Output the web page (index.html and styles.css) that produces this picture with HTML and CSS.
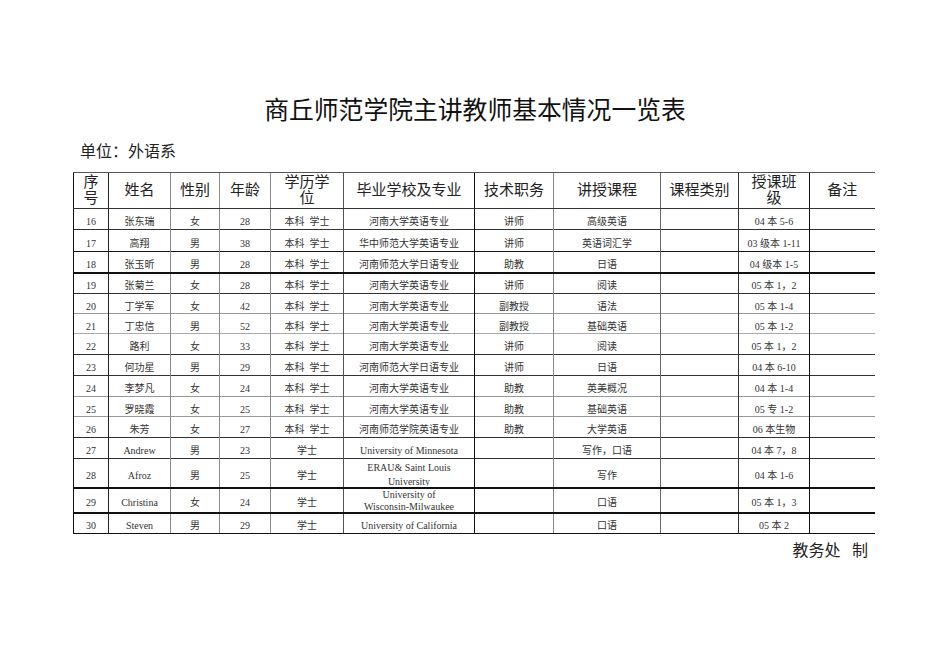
FILE: index.html
```html
<!DOCTYPE html>
<html lang="zh-CN">
<head>
<meta charset="utf-8">
<title>商丘师范学院主讲教师基本情况一览表</title>
<link rel="stylesheet" href="styles.css">
</head>
<body>
<div class="page">
  <h1 class="title">商丘师范学院主讲教师基本情况一览表</h1>
  <div class="unit">单位：外语系</div>
  <table class="sheet">
    <colgroup>
      <col class="c1"><col class="c2"><col class="c3"><col class="c4"><col class="c5"><col class="c6"><col class="c7"><col class="c8"><col class="c9"><col class="c10"><col class="c11">
    </colgroup>
    <thead>
      <tr class="head">
        <th class="v1">序<br>号</th>
        <th class="v2">姓名</th>
        <th class="v3">性别</th>
        <th class="v4">年龄</th>
        <th class="v5">学历学<br>位</th>
        <th class="v6">毕业学校及专业</th>
        <th class="v7">技术职务</th>
        <th class="v8">讲授课程</th>
        <th class="v9">课程类别</th>
        <th class="v10">授课班<br>级</th>
        <th class="v11">备注</th>
      </tr>
    </thead>
    <tbody>
      <tr class="r h21 t-dark"><td class="v1">16</td><td class="v2">张东瑞</td><td class="v3">女</td><td class="v4">28</td><td class="v5">本科&nbsp;&nbsp;学士</td><td class="v6">河南大学英语专业</td><td class="v7">讲师</td><td class="v8">高级英语</td><td class="v9"></td><td class="v10">04 本 5-6</td><td class="v11"></td></tr>
      <tr class="r h22 t-dark"><td class="v1">17</td><td class="v2">高翔</td><td class="v3">男</td><td class="v4">38</td><td class="v5">本科&nbsp;&nbsp;学士</td><td class="v6">华中师范大学英语专业</td><td class="v7">讲师</td><td class="v8">英语词汇学</td><td class="v9"></td><td class="v10">03 级本 1-11</td><td class="v11"></td></tr>
      <tr class="r h21 t-black"><td class="v1">18</td><td class="v2">张玉昕</td><td class="v3">男</td><td class="v4">28</td><td class="v5">本科&nbsp;&nbsp;学士</td><td class="v6">河南师范大学日语专业</td><td class="v7">助教</td><td class="v8">日语</td><td class="v9"></td><td class="v10">04 级本 1-5</td><td class="v11"></td></tr>
      <tr class="r h21 t-thick"><td class="v1">19</td><td class="v2">张菊兰</td><td class="v3">女</td><td class="v4">28</td><td class="v5">本科&nbsp;&nbsp;学士</td><td class="v6">河南大学英语专业</td><td class="v7">讲师</td><td class="v8">阅读</td><td class="v9"></td><td class="v10">05 本 1，2</td><td class="v11"></td></tr>
      <tr class="r h20 t-dark"><td class="v1">20</td><td class="v2">丁学军</td><td class="v3">女</td><td class="v4">42</td><td class="v5">本科&nbsp;&nbsp;学士</td><td class="v6">河南大学英语专业</td><td class="v7">副教授</td><td class="v8">语法</td><td class="v9"></td><td class="v10">05 本 1-4</td><td class="v11"></td></tr>
      <tr class="r h20 t-grey"><td class="v1">21</td><td class="v2">丁忠信</td><td class="v3">男</td><td class="v4">52</td><td class="v5">本科&nbsp;&nbsp;学士</td><td class="v6">河南大学英语专业</td><td class="v7">副教授</td><td class="v8">基础英语</td><td class="v9"></td><td class="v10">05 本 1-2</td><td class="v11"></td></tr>
      <tr class="r h21 t-light"><td class="v1">22</td><td class="v2">路利</td><td class="v3">女</td><td class="v4">33</td><td class="v5">本科&nbsp;&nbsp;学士</td><td class="v6">河南大学英语专业</td><td class="v7">讲师</td><td class="v8">阅读</td><td class="v9"></td><td class="v10">05 本 1，2</td><td class="v11"></td></tr>
      <tr class="r h21 t-dark"><td class="v1">23</td><td class="v2">何功星</td><td class="v3">男</td><td class="v4">29</td><td class="v5">本科&nbsp;&nbsp;学士</td><td class="v6">河南师范大学日语专业</td><td class="v7">讲师</td><td class="v8">日语</td><td class="v9"></td><td class="v10">04 本 6-10</td><td class="v11"></td></tr>
      <tr class="r h21 t-dark"><td class="v1">24</td><td class="v2">李梦凡</td><td class="v3">女</td><td class="v4">24</td><td class="v5">本科&nbsp;&nbsp;学士</td><td class="v6">河南大学英语专业</td><td class="v7">助教</td><td class="v8">英美概况</td><td class="v9"></td><td class="v10">04 本 1-4</td><td class="v11"></td></tr>
      <tr class="r h20 t-grey"><td class="v1">25</td><td class="v2">罗晓霞</td><td class="v3">女</td><td class="v4">25</td><td class="v5">本科&nbsp;&nbsp;学士</td><td class="v6">河南大学英语专业</td><td class="v7">助教</td><td class="v8">基础英语</td><td class="v9"></td><td class="v10">05 专 1-2</td><td class="v11"></td></tr>
      <tr class="r h21 t-grey"><td class="v1">26</td><td class="v2">朱芳</td><td class="v3">女</td><td class="v4">27</td><td class="v5">本科&nbsp;&nbsp;学士</td><td class="v6">河南师范学院英语专业</td><td class="v7">助教</td><td class="v8">大学英语</td><td class="v9"></td><td class="v10">06 本生物</td><td class="v11"></td></tr>
      <tr class="r h21 t-dark"><td class="v1">27</td><td class="v2">Andrew</td><td class="v3">男</td><td class="v4">23</td><td class="v5">学士</td><td class="v6">University of Minnesota</td><td class="v7"></td><td class="v8">写作，口语</td><td class="v9"></td><td class="v10">04 本 7，8</td><td class="v11"></td></tr>
      <tr class="r h29 t-dark"><td class="v1">28</td><td class="v2">Afroz</td><td class="v3">男</td><td class="v4">25</td><td class="v5">学士</td><td class="v6 two"><div class="clip c28">ERAU&amp; Saint Louis<br>University</div></td><td class="v7"></td><td class="v8">写作</td><td class="v9"></td><td class="v10">04 本 1-6</td><td class="v11"></td></tr>
      <tr class="r h25 t-thick"><td class="v1">29</td><td class="v2">Christina</td><td class="v3">女</td><td class="v4">24</td><td class="v5">学士</td><td class="v6 two"><div class="clip c29">University of<br>Wisconsin-Milwaukee</div></td><td class="v7"></td><td class="v8">口语</td><td class="v9"></td><td class="v10">05 本 1，3</td><td class="v11"></td></tr>
      <tr class="r h21 t-thick last"><td class="v1">30</td><td class="v2">Steven</td><td class="v3">男</td><td class="v4">29</td><td class="v5">学士</td><td class="v6">University of California</td><td class="v7"></td><td class="v8">口语</td><td class="v9"></td><td class="v10">05 本 2</td><td class="v11"></td></tr>
    </tbody>
  </table>
  <div class="footer">教务处 制</div>
</div>
</body>
</html>
```

FILE: styles.css
```css
html, body {
  margin: 0;
  padding: 0;
  background: #ffffff;
}

.page {
  width: 950px;
  height: 672px;
  padding-top: 93px;
  box-sizing: border-box;
  color: #222;
  font-family: "Liberation Serif", "Noto Sans CJK SC", serif;
}

.title {
  margin: 0;
  text-align: center;
  font-family: "Noto Sans CJK SC", sans-serif;
  font-weight: normal;
  font-size: 24.8px;
  line-height: 30px;
  height: 30px;
  color: #111;
}

.unit {
  margin: 17px 0 0 80px;
  font-family: "Noto Sans CJK SC", sans-serif;
  font-size: 16px;
  line-height: 20px;
  height: 20px;
  color: #222;
}

.sheet {
  margin: 12px 0 0 73px;
  border-collapse: collapse;
  table-layout: fixed;
  width: 801px;
}

.c1 { width: 35px; }
.c2 { width: 62px; }
.c3 { width: 49px; }
.c4 { width: 51px; }
.c5 { width: 73px; }
.c6 { width: 131px; }
.c7 { width: 79px; }
.c8 { width: 107px; }
.c9 { width: 78px; }
.c10 { width: 71px; }
.c11 { width: 65px; }

.sheet th,
.sheet td {
  padding: 0;
  text-align: center;
  white-space: nowrap;
  overflow: hidden;
  border-left: 1px solid #777;
}

/* vertical line colours */
.sheet .v1 { border-left: 1px solid #111; }
.sheet .v2 { border-left: 1px solid #222; }
.sheet .v3 { border-left: 1px solid #8a8a8a; }
.sheet .v4 { border-left: 1px solid #8a8a8a; }
.sheet .v5 { border-left: 1px solid #8a8a8a; }
.sheet .v6 { border-left: 1px solid #555; }
.sheet .v7 { border-left: 1px solid #111; }
.sheet .v8 { border-left: 1px solid #888; }
.sheet .v9 { border-left: 1px solid #666; }
.sheet .v10 { border-left: 1px solid #333; }
.sheet .v11 { border-left: 1px solid #111; }

.head th {
  height: 35px;
  font-family: "Noto Sans CJK SC", sans-serif;
  font-weight: normal;
  font-size: 15px;
  line-height: 16px;
  color: #222;
  vertical-align: middle;
  padding-bottom: 3px;
  box-sizing: border-box;
  border-top: 1px solid #555;
  border-bottom: 1px solid #333;
}

.r td {
  font-size: 10px;
  line-height: 12px;
  color: #333;
  vertical-align: middle;
  padding-top: 6px;
  box-sizing: border-box;
}

.r.h20 td { height: 20px; }
.r.h21 td { height: 21px; }
.r.h22 td { height: 22px; }
.r.h25 td { height: 25px; }
.r.h29 td { height: 29px; }

.r.t-dark td { border-top: 1px solid #333; }
.r.t-black td { border-top: 1px solid #111; }
.r.t-thick td { border-top: 2px solid #111; }
.r.t-grey td { border-top: 1px solid #999; }
.r.t-light td { border-top: 1px solid #aaa; }
.r.last td { border-bottom: 1px solid #111; }

.r td.two {
  padding-top: 0;
  vertical-align: top;
}

.clip {
  overflow: hidden;
  white-space: nowrap;
  box-sizing: border-box;
}

.c28 {
  line-height: 14px;
  padding-top: 2px;
  height: 27px;
}

.c29 {
  line-height: 12px;
  padding-top: 0;
  height: 23px;
}

.footer {
  width: 868px;
  text-align: right;
  margin-top: 5px;
  font-family: "Noto Sans CJK SC", sans-serif;
  font-size: 16px;
  line-height: 20px;
  word-spacing: 8px;
  color: #222;
}
```
